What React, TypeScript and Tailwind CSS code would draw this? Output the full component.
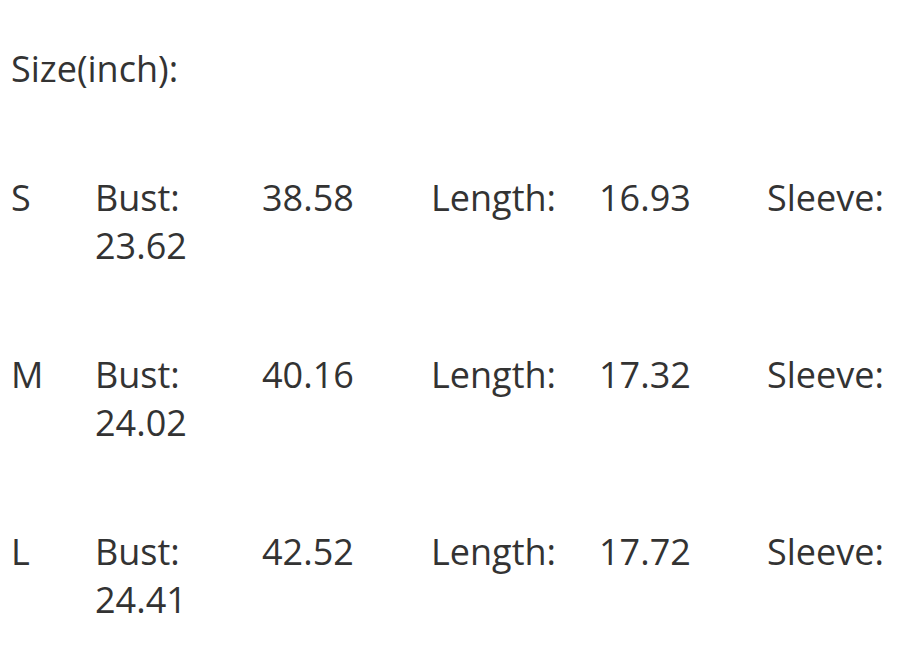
import React from 'react';

type SizeRow = {
  size: string;
  bust: string;
  length: string;
  sleeve: string;
};

const rows: SizeRow[] = [
  { size: 'S', bust: '38.58', length: '16.93', sleeve: '23.62' },
  { size: 'M', bust: '40.16', length: '17.32', sleeve: '24.02' },
  { size: 'L', bust: '42.52', length: '17.72', sleeve: '24.41' },
];

const App: React.FC = () => {
  return (
    <div
      className="min-h-[656px] w-full bg-white pl-[11px] pt-[45px] text-[36px] leading-[48px] text-[#333333]"
      style={{ fontFamily: '"Open Sans", "Noto Sans", sans-serif' }}
    >
      <div className="flex flex-col gap-[81px]">
        {/* Heading */}
        <p>Size(inch):</p>

        {/* Size rows */}
        {rows.map((row) => (
          <div key={row.size} className="flex">
            <span className="w-[84px] shrink-0">{row.size}</span>
            <div className="grid grid-cols-[167px_169px_168px_168px_auto]">
              <span>Bust:</span>
              <span>{row.bust}</span>
              <span>Length:</span>
              <span>{row.length}</span>
              <span>Sleeve:</span>
              <span>{row.sleeve}</span>
            </div>
          </div>
        ))}
      </div>
    </div>
  );
};

export default App;
